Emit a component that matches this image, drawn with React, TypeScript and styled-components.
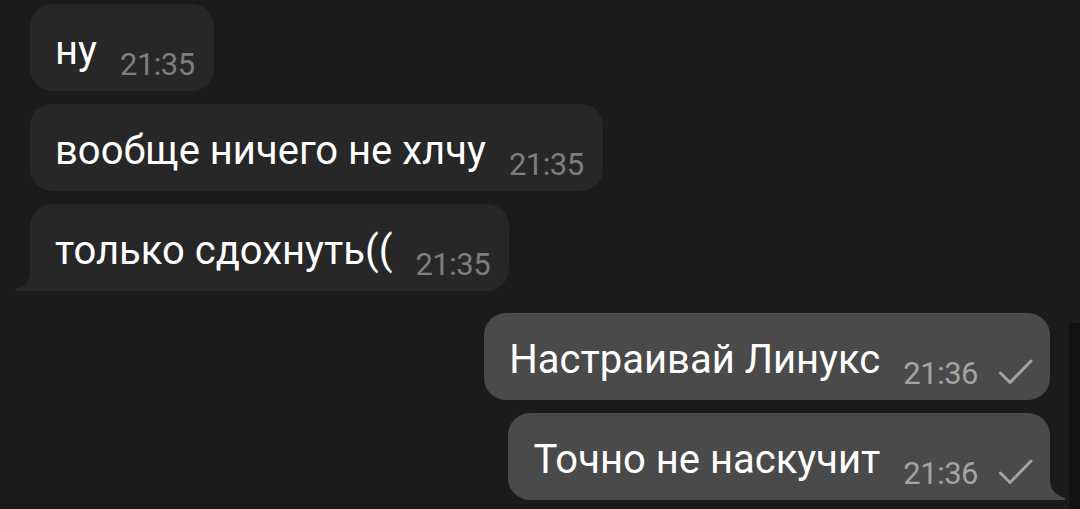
import { FC } from 'react'
import styled, { createGlobalStyle } from 'styled-components'

const GlobalStyle = createGlobalStyle`
  html, body {
    margin: 0;
    padding: 0;
    background: #1b1b1b;
  }
  body {
    font-family: Roboto, 'Noto Sans', 'DejaVu Sans', sans-serif;
    -webkit-font-smoothing: antialiased;
  }
`

type Side = 'in' | 'out'

interface MessageProps {
  side: Side
  text: string
  time: string
  tail?: boolean
}

const Message: FC<MessageProps> = ({ side, text, time, tail }) => (
  <Bubble $side={side} $tail={!!tail}>
    <Line>
      <Text>{text}</Text>
      <Meta $side={side}>{time}</Meta>
      {side === 'out' && (
        <Check viewBox="0 0 34 26" width={34} height={26}>
          <path d="M1.5 15 L11 24.5 L32 3" fill="none" stroke="currentColor" strokeWidth="3" strokeLinecap="round" strokeLinejoin="round" />
        </Check>
      )}
    </Line>
    {tail && (
      <Tail $side={side} viewBox="0 0 16 20" width={16} height={20}>
        {side === 'in' ? (
          <path d="M16 0 Q16 14 1.5 17.5 Q0 18.5 1.5 20 L16 20 Z" fill="currentColor" />
        ) : (
          <path d="M0 0 Q0 14 14.5 17.5 Q16 18.5 14.5 20 L0 20 Z" fill="currentColor" />
        )}
      </Tail>
    )}
  </Bubble>
)

const App: FC = () => (
  <>
    <GlobalStyle />
    <Page>
      <Chat>
        <Group $side="in">
          <Message side="in" text="ну" time="21:35" />
          <Message side="in" text="вообще ничего не хлчу" time="21:35" />
          <Message side="in" text="только сдохнуть((" time="21:35" tail />
        </Group>
        <Group $side="out">
          <Message side="out" text="Настраивай Линукс" time="21:36" />
          <Message side="out" text="Точно не наскучит" time="21:36" tail />
        </Group>
      </Chat>
      <ScrollStrip />
    </Page>
  </>
)

const Page = styled.div`
  display: flex;
  width: 1080px;
  height: 509px;
  overflow: hidden;
  background: #1b1b1b;
`

const Chat = styled.div`
  flex: 1;
  display: flex;
  flex-direction: column;
  gap: 22px;
  padding: 4px 19px 0 30px;
`

const ScrollStrip = styled.div`
  width: 11px;
  margin-top: 323px;
  background: #121212;
`

const Group = styled.div<{ $side: Side }>`
  display: flex;
  flex-direction: column;
  gap: 13px;
  align-items: ${({ $side }) => ($side === 'in' ? 'flex-start' : 'flex-end')};
`

const Bubble = styled.div<{ $side: Side; $tail: boolean }>`
  position: relative;
  box-sizing: border-box;
  height: 87px;
  padding: 27px 19px 0 25px;
  border-radius: 22px;
  background: ${({ $side }) => ($side === 'in' ? '#272727' : '#4a4a4a')};
  color: ${({ $side }) => ($side === 'in' ? '#272727' : '#4a4a4a')};
  ${({ $tail, $side }) =>
    $tail && ($side === 'in' ? 'border-bottom-left-radius: 0;' : 'border-bottom-right-radius: 0;')}
  ${({ $side }) => $side === 'out' && 'padding-right: 17px;'}
`

const Line = styled.div`
  white-space: nowrap;
  line-height: 40px;
`

const Text = styled.span`
  font-size: 40px;
  color: #ffffff;
`

const Meta = styled.span<{ $side: Side }>`
  margin-left: 23px;
  font-size: 31px;
  line-height: 31px;
  vertical-align: -11px;
  letter-spacing: -0.5px;
  color: ${({ $side }) => ($side === 'in' ? '#7e7e7e' : '#a3a3a3')};
`

const Check = styled.svg`
  margin-left: 21px;
  vertical-align: -11px;
  color: #a3a3a3;
`

const Tail = styled.svg<{ $side: Side }>`
  position: absolute;
  bottom: 0;
  ${({ $side }) => ($side === 'in' ? 'left: -16px;' : 'right: -16px;')}
`

export default App
